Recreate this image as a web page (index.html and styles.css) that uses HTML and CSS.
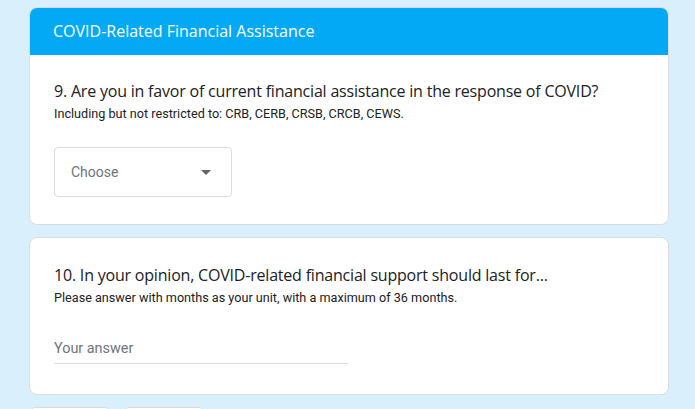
FILE: index.html
```html
<!DOCTYPE html>
<html>
<head>
<meta charset="utf-8">
<link rel="stylesheet" href="styles.css">
</head>
<body>
<div class="page">
  <section class="card">
    <div class="card-header">COVID-Related Financial Assistance</div>
    <div class="card-body q1">
      <div class="question">9. Are you in favor of current financial assistance in the response of COVID?</div>
      <div class="help">Including but not restricted to: CRB, CERB, CRSB, CRCB, CEWS.</div>
      <div class="select">
        <span class="select-label">Choose</span>
        <svg class="arrow" width="10" height="5" viewBox="0 0 10 5"><path d="M0 0 L10 0 L5 5 Z" fill="#5f6368"/></svg>
      </div>
    </div>
  </section>
  <section class="card">
    <div class="card-body q2">
      <div class="question">10. In your opinion, COVID-related financial support should last for...</div>
      <div class="help">Please answer with months as your unit, with a maximum of 36 months.</div>
      <div class="text-input">Your answer</div>
    </div>
  </section>
  <div class="buttons">
    <div class="btn"></div>
    <div class="btn"></div>
  </div>
</div>
</body>
</html>
```

FILE: styles.css
```css
html, body {
  margin: 0;
  padding: 0;
  background: #d9effc;
  height: 100%;
  overflow: hidden;
}
.page {
  width: 640px;
  margin-left: 29px;
  padding-top: 7px;
  display: flex;
  flex-direction: column;
  gap: 12px;
}
.card {
  background: #fff;
  border: 1px solid #dadce0;
  border-radius: 8px;
  overflow: hidden;
}
.card-header {
  background: #03a9f4;
  color: #fff;
  height: 48px;
  margin: -1px -1px 0 -1px;
  padding-left: 24px;
  display: flex;
  align-items: center;
  font-family: "Open Sans", sans-serif;
  font-size: 16px;
}
.card-body {
  padding: 0 24px;
}
.q1 {
  padding-top: 24px;
  padding-bottom: 27px;
}
.q2 {
  padding-top: 25px;
  padding-bottom: 30px;
}
.question {
  font-family: "Open Sans", sans-serif;
  font-size: 16px;
  line-height: 24px;
  color: #202124;
  letter-spacing: -0.2px;
}
.help {
  font-family: Roboto, sans-serif;
  font-size: 12.65px;
  line-height: 18px;
  color: #202124;
  margin-top: 2px;
}
.select {
  margin-top: 24px;
  width: 176px;
  height: 48px;
  border: 1px solid #dadce0;
  border-radius: 4px;
  display: flex;
  align-items: center;
  justify-content: space-between;
}
.select-label {
  font-family: Roboto, sans-serif;
  font-size: 14px;
  color: #70757a;
  margin-left: 16px;
}
.arrow {
  margin-right: 20px;
}
.text-input {
  margin-top: 32px;
  width: 294px;
  border-bottom: 1px solid #dadce0;
  font-family: Roboto, sans-serif;
  font-size: 14.4px;
  line-height: 20px;
  color: #70757a;
  padding-bottom: 4px;
}
.buttons {
  display: flex;
  gap: 14px;
  margin-left: 1px;
}
.btn {
  width: 78px;
  height: 30px;
  background: #fff;
  border: 1px solid #dadce0;
  border-radius: 5px;
}
```
